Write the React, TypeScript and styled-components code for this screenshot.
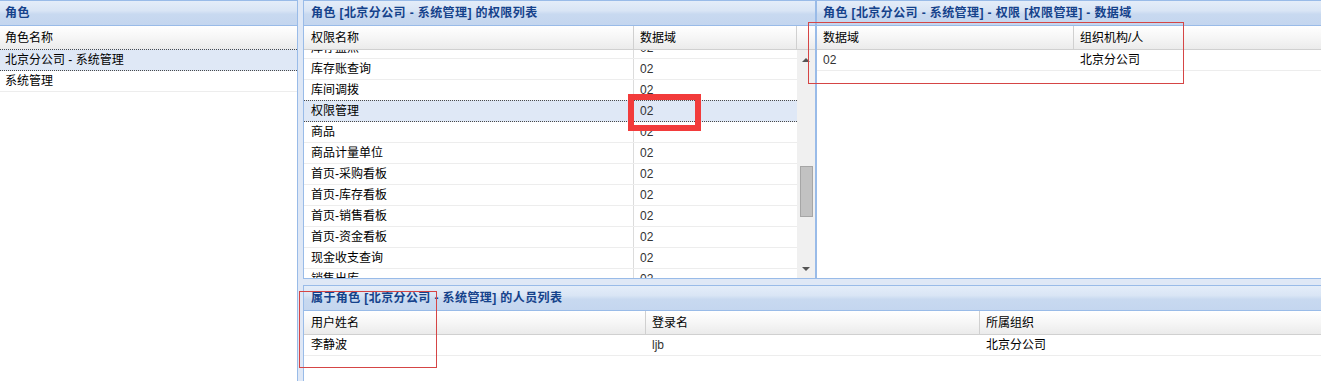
import React from "react";
import styled, { createGlobalStyle } from "styled-components";

const GlobalStyle = createGlobalStyle`
  html, body { margin: 0; padding: 0; background: #ffffff; }
  body {
    font-family: "Liberation Sans", "Noto Sans CJK SC", sans-serif;
    font-size: 12px;
    color: #000;
  }
  * { box-sizing: border-box; }
`;

const Root = styled.div`
  position: relative;
  display: flex;
  width: 1321px;
  height: 381px;
  background: #dfe8f6;
  overflow: hidden;
`;

const LeftPanel = styled.section`
  width: 298px;
  flex: none;
  display: flex;
  flex-direction: column;
  background: #ffffff;
  border-right: 1px solid #99bbe8;
`;

const Center = styled.div`
  flex: 1;
  margin-left: 5px;
  display: flex;
  flex-direction: column;
  gap: 6px;
  min-width: 0;
`;

const North = styled.div`
  height: 279px;
  flex: none;
  display: flex;
`;

const MiddlePanel = styled.section`
  width: 513px;
  flex: none;
  display: flex;
  flex-direction: column;
  background: #ffffff;
  border-left: 1px solid #99bbe8;
  border-right: 1px solid #99bbe8;
  border-bottom: 1px solid #99bbe8;
`;

const RightPanel = styled.section`
  flex: 1;
  display: flex;
  flex-direction: column;
  background: #ffffff;
  border-left: 1px solid #99bbe8;
  border-bottom: 1px solid #99bbe8;
  min-width: 0;
`;

const SouthPanel = styled.section`
  flex: 1;
  display: flex;
  flex-direction: column;
  background: #ffffff;
  border-left: 1px solid #99bbe8;
`;

const TitleBar = styled.div<{ $pad: number }>`
  height: 26px;
  flex: none;
  display: flex;
  align-items: center;
  padding-left: ${(p) => p.$pad}px;
  border-top: 1px solid #99bbe8;
  border-bottom: 1px solid #99bbe8;
  background: linear-gradient(
    to bottom,
    #e4edf9 0%,
    #d9e5f5 40%,
    #c8d9f0 55%,
    #c4d6ef 100%
  );
  color: #15428b;
  font-weight: bold;
  font-size: 12px;
  letter-spacing: 0.4px;
  line-height: 16px;
  white-space: nowrap;
`;

const GridHeader = styled.div`
  height: 24px;
  flex: none;
  display: flex;
  border-bottom: 1px solid #d0d0d0;
  background: linear-gradient(to bottom, #ffffff 0%, #f6f6f6 50%, #ebebeb 100%);
`;

const HeaderCell = styled.div<{ $w?: number; $pad?: number; $sep?: boolean }>`
  ${(p) => (p.$w ? `width: ${p.$w}px; flex: none;` : "flex: 1;")}
  display: flex;
  align-items: center;
  padding-left: ${(p) => p.$pad ?? 6}px;
  border-right: ${(p) => (p.$sep ? "1px solid #d0d0d0" : "none")};
  white-space: nowrap;
  line-height: 16px;
`;

const Body = styled.div`
  flex: 1;
  display: flex;
  overflow: hidden;
  min-height: 0;
`;

const Viewport = styled.div`
  flex: 1;
  overflow: hidden;
  min-width: 0;
`;

const RowList = styled.div<{ $offset: number }>`
  transform: translateY(-${(p) => p.$offset}px);
`;

const Row = styled.div<{ $selected?: boolean }>`
  display: flex;
  height: ${(p) => (p.$selected ? 22 : 21)}px;
  margin-top: ${(p) => (p.$selected ? -1 : 0)}px;
  background: ${(p) => (p.$selected ? "#dfe8f6" : "#ffffff")};
  border-top: ${(p) => (p.$selected ? "1px dotted #4a4a4a" : "none")};
  border-bottom: ${(p) => (p.$selected ? "1px dotted #4a4a4a" : "1px solid #ededed")};
`;

const Cell = styled.div<{ $w?: number; $pad?: number; $line?: boolean; $muted?: boolean }>`
  ${(p) => (p.$w ? `width: ${p.$w}px; flex: none;` : "flex: 1;")}
  display: flex;
  align-items: center;
  padding-left: ${(p) => p.$pad ?? 6}px;
  border-right: ${(p) => (p.$line ? "1px solid #dcdcdc" : "none")};
  color: ${(p) => (p.$muted ? "#333333" : "#000000")};
  white-space: nowrap;
  line-height: 16px;
`;

const Scrollbar = styled.div`
  width: 18px;
  flex: none;
  display: flex;
  flex-direction: column;
  background: #f0f0f0;
`;

const ArrowButton = styled.div`
  height: 18px;
  flex: none;
  display: flex;
  align-items: center;
  justify-content: center;
`;

const Track = styled.div`
  flex: 1;
  display: flex;
  flex-direction: column;
  align-items: flex-start;
  padding-left: 3px;
`;

const Thumb = styled.div`
  width: 13px;
  border: 1px solid #a6a6a6;
  background: #c2c2c2;
`;

const Annotation = styled.div<{ $x: number; $y: number; $w: number; $h: number; $thick?: boolean }>`
  position: absolute;
  left: ${(p) => p.$x}px;
  top: ${(p) => p.$y}px;
  width: ${(p) => p.$w}px;
  height: ${(p) => p.$h}px;
  border: ${(p) => (p.$thick ? "6px solid #f23b3b" : "1px solid #d54545")};
  pointer-events: none;
`;

const Triangle = ({ up }: { up?: boolean }) => (
  <svg width="8" height="5" viewBox="0 0 8 5">
    <path d={up ? "M0 5 L4 1 L8 5 Z" : "M0 0 L8 0 L4 4 Z"} fill="#555" />
  </svg>
);

const permissions = [
  "库存盘点",
  "库存账查询",
  "库间调拨",
  "权限管理",
  "商品",
  "商品计量单位",
  "首页-采购看板",
  "首页-库存看板",
  "首页-销售看板",
  "首页-资金看板",
  "现金收支查询",
  "销售出库",
];

const ROW_H = 21;
const ROWS_ABOVE = 20;
const TOTAL_ROWS = 41;
const VIEWPORT_H = 228;
const TRACK_H = 192;
const SCROLL_TOP = ROWS_ABOVE * ROW_H + 12;

export default function App() {
  const totalH = TOTAL_ROWS * ROW_H;
  const thumbH = Math.round((TRACK_H * VIEWPORT_H) / totalH);
  const thumbTop = Math.round((TRACK_H * SCROLL_TOP) / totalH) + 2;

  return (
    <>
      <GlobalStyle />
      <Root>
        <LeftPanel>
          <TitleBar $pad={5}>角色</TitleBar>
          <GridHeader>
            <HeaderCell $pad={5}>角色名称</HeaderCell>
          </GridHeader>
          <Row $selected>
            <Cell $pad={5}>北京分公司 - 系统管理</Cell>
          </Row>
          <Row>
            <Cell $pad={5}>系统管理</Cell>
          </Row>
        </LeftPanel>

        <Center>
          <North>
            <MiddlePanel>
              <TitleBar $pad={7}>角色 [北京分公司 - 系统管理] 的权限列表</TitleBar>
              <GridHeader>
                <HeaderCell $w={330} $pad={7} $sep>
                  权限名称
                </HeaderCell>
                <HeaderCell $w={163} $pad={6} $sep>
                  数据域
                </HeaderCell>
                <HeaderCell $w={18} />
              </GridHeader>
              <Body>
                <Viewport>
                  <RowList $offset={12}>
                    {permissions.map((name, i) => (
                      <Row key={name} $selected={i === 3}>
                        <Cell $w={330} $pad={7} $line>
                          {name}
                        </Cell>
                        <Cell $pad={6} $muted>
                          02
                        </Cell>
                      </Row>
                    ))}
                  </RowList>
                </Viewport>
                <Scrollbar>
                  <ArrowButton>
                    <Triangle up />
                  </ArrowButton>
                  <Track>
                    <Thumb style={{ marginTop: thumbTop, height: thumbH }} />
                  </Track>
                  <ArrowButton>
                    <Triangle />
                  </ArrowButton>
                </Scrollbar>
              </Body>
            </MiddlePanel>

            <RightPanel>
              <TitleBar $pad={6}>
                角色 [北京分公司 - 系统管理] - 权限 [权限管理] - 数据域
              </TitleBar>
              <GridHeader>
                <HeaderCell $w={257} $pad={6} $sep>
                  数据域
                </HeaderCell>
                <HeaderCell $pad={6}>组织机构/人</HeaderCell>
              </GridHeader>
              <Row>
                <Cell $w={257} $pad={6} $muted>
                  02
                </Cell>
                <Cell $pad={6}>北京分公司</Cell>
              </Row>
            </RightPanel>
          </North>

          <SouthPanel>
            <TitleBar $pad={7}>属于角色 [北京分公司 - 系统管理] 的人员列表</TitleBar>
            <GridHeader>
              <HeaderCell $w={342} $pad={7} $sep>
                用户姓名
              </HeaderCell>
              <HeaderCell $w={334} $pad={6} $sep>
                登录名
              </HeaderCell>
              <HeaderCell $pad={6}>所属组织</HeaderCell>
            </GridHeader>
            <Row>
              <Cell $w={342} $pad={7}>
                李静波
              </Cell>
              <Cell $w={334} $pad={6} $muted>
                ljb
              </Cell>
              <Cell $pad={6}>北京分公司</Cell>
            </Row>
          </SouthPanel>
        </Center>

        <Annotation $x={628} $y={94} $w={73} $h={37} $thick />
        <Annotation $x={808} $y={22} $w={376} $h={62} />
        <Annotation $x={299} $y={291} $w={138} $h={77} />
      </Root>
    </>
  );
}
